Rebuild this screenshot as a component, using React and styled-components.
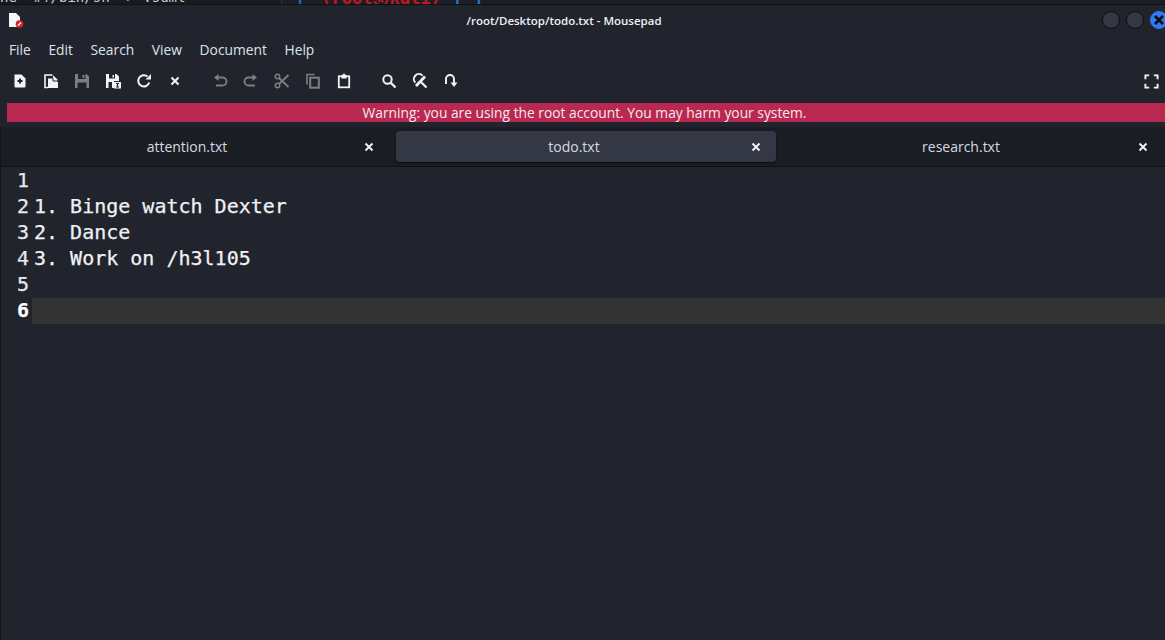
import styled, { createGlobalStyle } from 'styled-components';

const Global = createGlobalStyle`
  html, body {
    margin: 0;
    height: 100%;
    background: #21242d;
    overflow: hidden;
  }
  #root {
    height: 100%;
  }
`;

const Page = styled.div`
  height: 640px;
  display: flex;
  flex-direction: column;
  font-family: 'Open Sans', 'Noto Sans', sans-serif;
  color: #e6e9ee;
  background: #21242d;
`;

// the terminal window that peeks out above the editor
const BehindStrip = styled.div`
  height: 5px;
  box-sizing: border-box;
  flex: none;
  display: flex;
  overflow: hidden;
  background: #191b21;
  border-bottom: 1px solid #0f1014;
  font-family: 'DejaVu Sans Mono', monospace;
  line-height: 20px;
`;

const BehindLeft = styled.div`
  width: 281px;
  flex: none;
  margin-top: -13px;
  font-size: 14px;
  color: #c9ccd2;
  white-space: nowrap;
`;

const BehindRight = styled.div`
  flex: 1;
  display: flex;
  margin-top: -12px;
  padding-left: 13px;
  font-size: 17px;
  font-weight: bold;
  color: #c0171c;
  white-space: nowrap;
  background: #1c1e26;
  border-left: 1px solid #30333d;
  span {
    color: #2f6fcf;
    margin-right: 16px;
  }
  span:last-child {
    margin-left: 2px;
  }
`;

const TitleBar = styled.div`
  height: 30px;
  flex: none;
  display: grid;
  grid-template-columns: 1fr auto 1fr;
  align-items: center;
  padding: 0 0 0 9px;
`;

const Title = styled.div`
  font-size: 11.5px;
  font-weight: 600;
  color: #eef0f3;
  margin-right: 46px;
`;

const WindowButtons = styled.div`
  justify-self: end;
  display: flex;
  gap: 6px;
  margin-right: -3px;
`;

const WindowButton = styled.div`
  width: 18px;
  height: 18px;
  box-sizing: border-box;
  border-radius: 50%;
  display: flex;
  align-items: center;
  justify-content: center;
  background: ${p => (p.$active ? '#2f7bf0' : '#343844')};
  border: 1px solid ${p => (p.$active ? '#2f7bf0' : '#0e0f13')};
`;

const MenuBar = styled.div`
  height: 28px;
  flex: none;
  display: flex;
  align-items: center;
  gap: 17.6px;
  padding: 0 0 0 9px;
  font-size: 13.8px;
  color: #dfe3e9;
`;

const Toolbar = styled.div`
  height: 36px;
  flex: none;
  display: flex;
  align-items: center;
  padding-left: 4px;
`;

const ToolButton = styled.div`
  width: 31px;
  height: 34px;
  flex: none;
  display: flex;
  align-items: center;
  justify-content: center;
  color: ${p => (p.$off ? '#7d7f85' : '#f2f3f4')};
`;

const EdgeButton = styled(ToolButton)`
  margin-right: -2px;
`;

const ToolSeparator = styled.div`
  width: ${p => p.$w}px;
  height: 30px;
  flex: none;
  &::after {
    content: '';
    display: block;
    width: 1px;
    height: 30px;
    margin: 0 auto;
    background: #252831;
  }
`;

const ToolSpring = styled.div`
  flex: 1;
`;

const WarningBar = styled.div`
  height: 19px;
  flex: none;
  margin: 4px 0 0 7px;
  display: flex;
  align-items: center;
  justify-content: center;
  padding-right: 3px;
  background: #b82850;
  color: #f6e9ed;
  font-size: 13.8px;
`;

const TabBar = styled.div`
  height: 40px;
  flex: none;
  margin-top: 5px;
  box-sizing: border-box;
  display: grid;
  grid-template-columns: 395px 380px 1fr;
  align-items: center;
  background: #1a1d24;
  border-bottom: 1px solid #101116;
  border-left: 1px solid #14161b;
`;

const Tab = styled.div`
  box-sizing: border-box;
  height: 31px;
  display: flex;
  align-items: center;
  justify-content: flex-end;
  padding-right: ${p => p.$pad}px;
  border-radius: 4px;
  font-size: 14px;
  color: #d6dae0;
  background: ${p => (p.$active ? '#343844' : 'transparent')};
  box-shadow: ${p => (p.$active ? '0 1px 2px #0b0c0f' : 'none')};
`;

const TabName = styled.div`
  width: 340px;
  margin-right: 6px;
  text-align: center;
`;

const TabClose = styled.div`
  width: 12px;
  height: 12px;
  flex: none;
  display: flex;
  align-items: center;
  justify-content: center;
  color: #eef0f3;
`;

const Editor = styled.div`
  flex: 1;
  display: flex;
  border-left: 1px solid #14161b;
  font-family: 'DejaVu Sans Mono', monospace;
  font-size: 20px;
  line-height: 24px;
  padding-top: 1px;
  -webkit-text-stroke: 0.25px;
`;

const Gutter = styled.div`
  width: 31px;
  flex: none;
  box-sizing: border-box;
  padding-left: 16px;
`;

const LineNumber = styled.div`
  height: 26px;
  font-weight: ${p => (p.$current ? 700 : 400)};
  color: ${p => (p.$current ? '#ffffff' : '#e8eaee')};
`;

const Lines = styled.div`
  flex: 1;
  min-width: 0;
`;

const Line = styled.div`
  height: 26px;
  padding-left: 2px;
  white-space: pre;
  color: #f0f1f4;
  background: ${p => (p.$current ? '#333333' : 'transparent')};
`;

const Icon = ({ children, size = 16 }) => (
  <svg width={size} height={size} viewBox="0 0 16 16" fill="none" stroke="none">
    {children}
  </svg>
);

const AppLogo = () => (
  <svg width="15" height="15" viewBox="0 0 15 15">
    <path d="M0 0H7L11 4V14H0Z" fill="#f6f6f6" />
    <circle cx="10.5" cy="11" r="3.8" fill="#d8232a" />
    <path d="M9 12.5L12 9.5" stroke="#fff" strokeWidth="1.4" />
  </svg>
);

const icons = {
  new: (
    <Icon>
      <path d="M2.5 1.5H9.5L13.5 5.5V13.5Q13.5 14.5 12.5 14.5H3.5Q2.5 14.5 2.5 13.5Z" fill="currentColor" />
      <path d="M8 5.5V10.5M5.5 8H10.5" stroke="#21242d" strokeWidth="2" />
    </Icon>
  ),
  open: (
    <Icon>
      <path d="M9.5 2H2V14.5H5" stroke="currentColor" strokeWidth="1.6" />
      <path d="M5 5H10V2.2L14.5 6.5V9H15V15H5Z" fill="currentColor" />
      <path d="M4.5 5H10V8H15" stroke="#21242d" strokeWidth="1" />
    </Icon>
  ),
  save: (
    <Icon>
      <path d="M1 1H12.5L15 3.5V15H1Z" fill="currentColor" />
      <path d="M4 1V6H11.5V1Z" fill="#21242d" />
      <path d="M3.5 9.5H12.5V15H3.5Z" fill="#21242d" />
      <path d="M8.5 2H10.5V5H8.5Z" fill="currentColor" />
    </Icon>
  ),
  saveAs: (
    <Icon>
      <path d="M1 1H11.5L14 3.5V8H9V15H1Z" fill="currentColor" />
      <path d="M4 1V5.5H10V1Z" fill="#21242d" />
      <path d="M7.5 2H9V4.5H7.5Z" fill="currentColor" />
      <path d="M3.5 9H7V15H3.5Z" fill="#21242d" />
      <path d="M9 9H16V15.5H9Z" fill="currentColor" />
      <path d="M11 10.5H14M11 14H14M12.5 10.5V14" stroke="#21242d" strokeWidth="1.2" />
    </Icon>
  ),
  reload: (
    <Icon>
      <path d="M13.2 9.5A5.6 5.6 0 1 1 11.5 3.6" stroke="currentColor" strokeWidth="2" />
      <path d="M9.5 6.5H15V1Z" fill="currentColor" />
    </Icon>
  ),
  close: (
    <Icon>
      <path d="M4.5 4.5L11.5 11.5M11.5 4.5L4.5 11.5" stroke="currentColor" strokeWidth="2" />
    </Icon>
  ),
  undo: (
    <Icon>
      <path d="M5 4.5H10.5A3.7 3.7 0 0 1 10.5 12.5H4" stroke="currentColor" strokeWidth="1.8" />
      <path d="M6.5 1V8L2 4.5Z" fill="currentColor" />
    </Icon>
  ),
  redo: (
    <Icon>
      <path d="M11 4.5H5.5A3.7 3.7 0 0 0 5.5 12.5H12" stroke="currentColor" strokeWidth="1.8" />
      <path d="M9.5 1V8L14 4.5Z" fill="currentColor" />
    </Icon>
  ),
  cut: (
    <Icon>
      <circle cx="3.5" cy="3.5" r="2.2" stroke="currentColor" strokeWidth="1.5" />
      <circle cx="3.5" cy="12.5" r="2.2" stroke="currentColor" strokeWidth="1.5" />
      <path d="M5 5L14.5 14M5 11L14.5 2" stroke="currentColor" strokeWidth="1.8" />
    </Icon>
  ),
  copy: (
    <Icon>
      <path d="M9.5 1.5H2V11.5" stroke="currentColor" strokeWidth="1.6" />
      <rect x="5.2" y="4.7" width="8.6" height="10" stroke="currentColor" strokeWidth="2" />
    </Icon>
  ),
  paste: (
    <Icon>
      <rect x="2.8" y="3.3" width="10.4" height="11" stroke="currentColor" strokeWidth="1.8" />
      <path d="M5.5 1.8H7L7.5 0.5H8.5L9 1.8H10.5V5.5H5.5Z" fill="currentColor" />
    </Icon>
  ),
  search: (
    <Icon>
      <circle cx="6.5" cy="6.5" r="4.2" stroke="currentColor" strokeWidth="2" />
      <path d="M9.5 9.5L14.5 14.5" stroke="currentColor" strokeWidth="2.4" />
    </Icon>
  ),
  replace: (
    <Icon>
      <path d="M10.5 2.6A4.4 4.4 0 1 0 3.3 9.6" stroke="currentColor" strokeWidth="2" />
      <path d="M3 12L12 2.5L14 4.5L5 14Z" fill="currentColor" />
      <path d="M8.5 8.5L14.5 14.5" stroke="currentColor" strokeWidth="2.2" />
    </Icon>
  ),
  goto: (
    <Icon>
      <path d="M3 11V6A4 4 0 0 1 11 6V10" stroke="currentColor" strokeWidth="1.9" />
      <path d="M7.5 9.5H14.5L11 14Z" fill="currentColor" />
    </Icon>
  ),
  fullscreen: (
    <Icon size={15}>
      <path d="M1.5 5.5V1.5H5.5M10.5 1.5H14.5V5.5M14.5 10.5V14.5H10.5M5.5 14.5H1.5V10.5" stroke="currentColor" strokeWidth="2" />
    </Icon>
  ),
};

const tabs = [
  { name: 'attention.txt', pad: 21 },
  { name: 'todo.txt', pad: 14, active: true },
  { name: 'research.txt', pad: 16 },
];

const lines = ['', '1. Binge watch Dexter', '2. Dance', '3. Work on /h3l105', '', ''];

const App = () => (
  <Page>
    <Global />
    <BehindStrip>
      <BehindLeft>{'he "#!/bin/sh" > .suml'}</BehindLeft>
      <BehindRight>
        <span>|</span>
        (root㉿kali)
        <span>-[~]</span>
      </BehindRight>
    </BehindStrip>
    <TitleBar>
      <AppLogo />
      <Title>/root/Desktop/todo.txt - Mousepad</Title>
      <WindowButtons>
        <WindowButton />
        <WindowButton />
        <WindowButton $active>
          <svg width="12" height="12" viewBox="0 0 12 12">
            <path d="M2 2L10 10M10 2L2 10" stroke="#0b0d14" strokeWidth="2.6" />
          </svg>
        </WindowButton>
      </WindowButtons>
    </TitleBar>
    <MenuBar>
      <span>File</span>
      <span>Edit</span>
      <span>Search</span>
      <span>View</span>
      <span>Document</span>
      <span>Help</span>
    </MenuBar>
    <Toolbar>
      <ToolButton>{icons.new}</ToolButton>
      <ToolButton>{icons.open}</ToolButton>
      <ToolButton $off>{icons.save}</ToolButton>
      <ToolButton>{icons.saveAs}</ToolButton>
      <ToolButton>{icons.reload}</ToolButton>
      <ToolButton>{icons.close}</ToolButton>
      <ToolSeparator $w={14} />
      <ToolButton $off>{icons.undo}</ToolButton>
      <ToolButton $off>{icons.redo}</ToolButton>
      <ToolButton $off>{icons.cut}</ToolButton>
      <ToolButton $off>{icons.copy}</ToolButton>
      <ToolButton>{icons.paste}</ToolButton>
      <ToolSeparator $w={14} />
      <ToolButton>{icons.search}</ToolButton>
      <ToolButton>{icons.replace}</ToolButton>
      <ToolButton>{icons.goto}</ToolButton>
      <ToolSpring />
      <EdgeButton>{icons.fullscreen}</EdgeButton>
    </Toolbar>
    <WarningBar>Warning: you are using the root account. You may harm your system.</WarningBar>
    <TabBar>
      {tabs.map(tab => (
        <Tab key={tab.name} $active={tab.active} $pad={tab.pad}>
          <TabName>{tab.name}</TabName>
          <TabClose>
            <svg width="10" height="10" viewBox="0 0 10 10">
              <path d="M1.5 1.5L8.5 8.5M8.5 1.5L1.5 8.5" stroke="currentColor" strokeWidth="2" />
            </svg>
          </TabClose>
        </Tab>
      ))}
    </TabBar>
    <Editor>
      <Gutter>
        {lines.map((_, i) => (
          <LineNumber key={i} $current={i === 5}>
            {i + 1}
          </LineNumber>
        ))}
      </Gutter>
      <Lines>
        {lines.map((text, i) => (
          <Line key={i} $current={i === 5}>
            {text}
          </Line>
        ))}
      </Lines>
    </Editor>
  </Page>
);

export default App;
